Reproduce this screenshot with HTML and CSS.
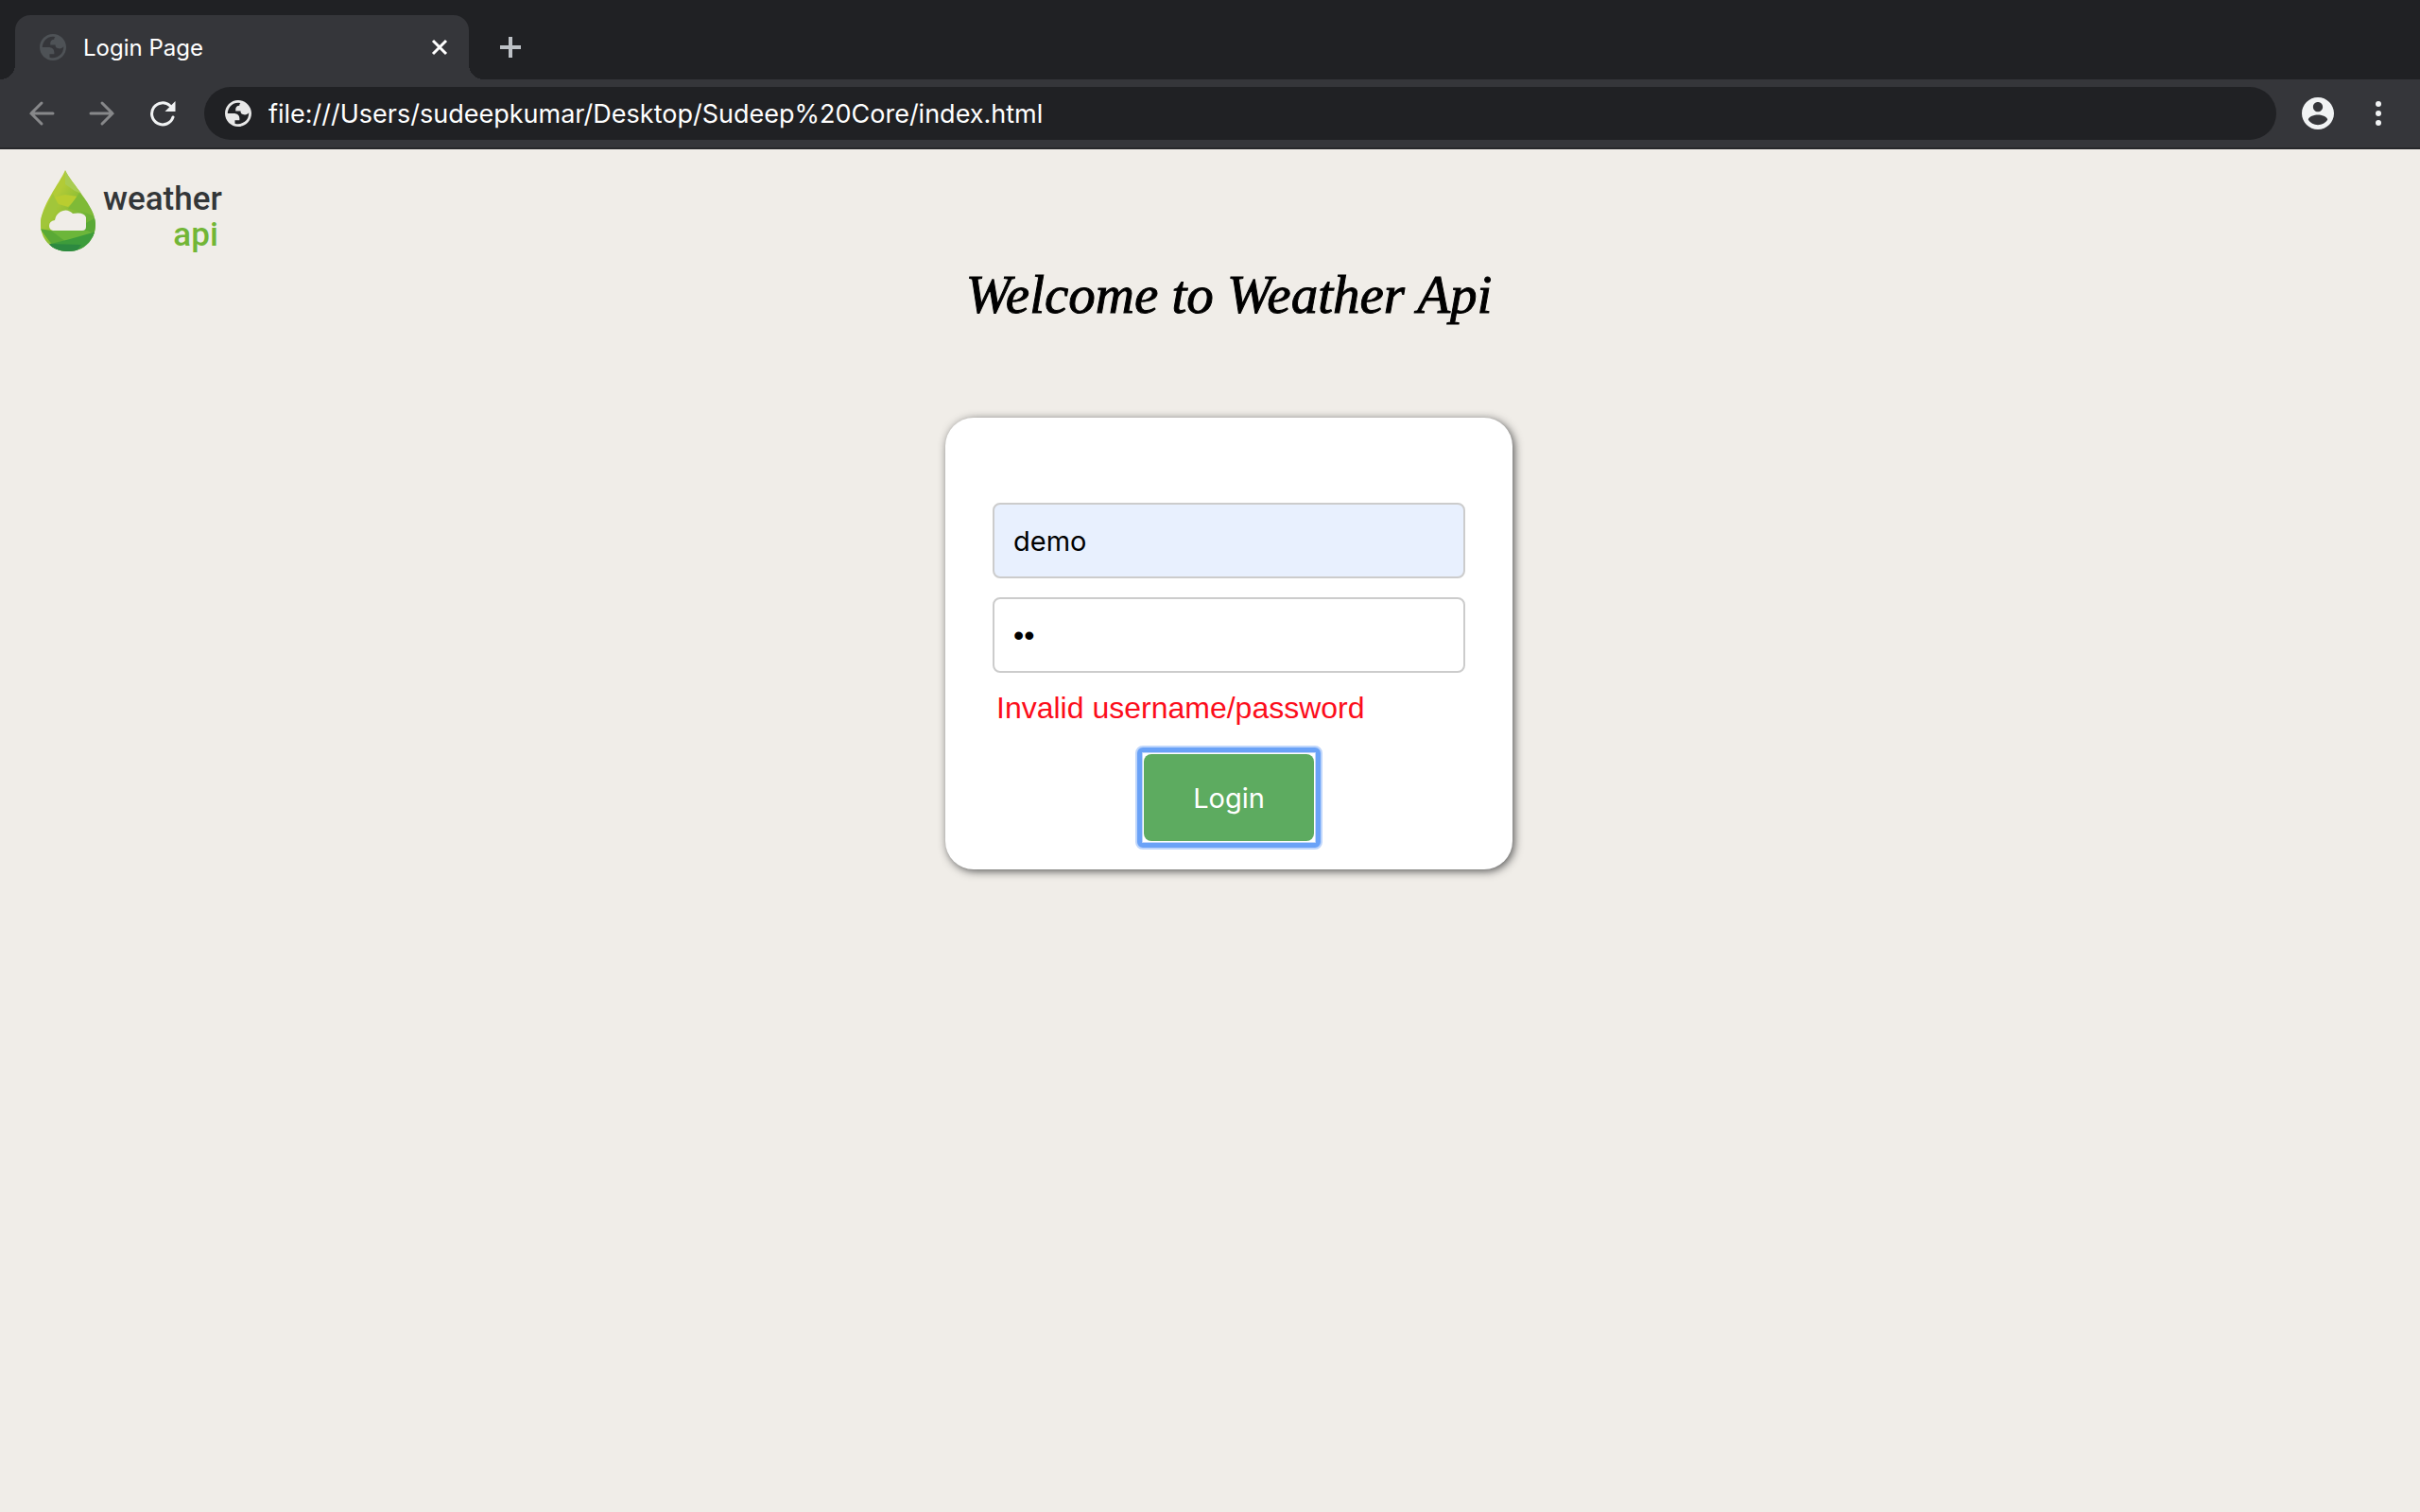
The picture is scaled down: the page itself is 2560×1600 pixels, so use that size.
FILE: index.html
```html
<!DOCTYPE html>
<html lang="en">
<head>
<meta charset="utf-8">
<title>Login Page</title>
<link rel="stylesheet" href="styles.css">
</head>
<body>
<svg class="sprite" aria-hidden="true">
  <symbol id="globe" viewBox="2 2 20 20">
    <path fill-rule="evenodd" d="M12 2C6.48 2 2 6.48 2 12s4.48 10 10 10 10-4.48 10-10S17.52 2 12 2zM4 12h4.4c3.407.022 4.922 1.73 4.543 5.127H9.488v2.47a8.004 8.004 0 0 0 10.498-8.083C19.327 12.504 18.332 13 17 13c-2.137 0-3.206-.916-3.206-2.75h-3.748c-.274-2.728.683-4.092 2.87-4.092 0-.975.327-1.597.811-1.97A8.004 8.004 0 0 0 4 12z"/>
  </symbol>
</svg>
<div class="browser">
  <div class="tab-strip">
    <div class="tab">
      <svg class="tab-icon"><use href="#globe"/></svg>
      <span class="tab-title">Login Page</span>
      <button class="icon-button" aria-label="Close tab"><svg class="close" viewBox="0 0 18 18"><path d="M2 2l14 14M16 2L2 16"/></svg></button>
    </div>
    <button class="icon-button new-tab" aria-label="New tab"><svg class="plus" viewBox="0 0 24 24"><path d="M12 1v22M1 12h22"/></svg></button>
  </div>
  <div class="toolbar">
    <button class="icon-button" aria-label="Back"><svg class="arrow" viewBox="0 0 28 28"><path d="M26 14H3M14 3L3 14l11 11"/></svg></button>
    <button class="icon-button" aria-label="Forward"><svg class="arrow" viewBox="0 0 28 28"><path d="M2 14h23M14 3l11 11-11 11"/></svg></button>
    <button class="icon-button" aria-label="Reload"><svg class="reload" viewBox="0 0 28 28"><path class="reload-arc" d="M25 18A11.500 11.500 0 1 1 22 6"/><path class="reload-tip" d="M27.500 1v11h-11z"/></svg></button>
    <div class="address">
      <svg class="site-icon"><use href="#globe"/></svg>
      <input class="url" type="text" aria-label="Address" value="file:///Users/sudeepkumar/Desktop/Sudeep%20Core/index.html">
    </div>
    <button class="icon-button profile" aria-label="Profile"><svg class="avatar" viewBox="2 2 20 20"><path d="M12 2C6.480 2 2 6.480 2 12s4.480 10 10 10 10-4.480 10-10S17.520 2 12 2zm0 3c1.660 0 3 1.340 3 3s-1.340 3-3 3-3-1.340-3-3 1.340-3 3-3zm0 14.200c-2.500 0-4.710-1.280-6-3.220.030-1.990 4-3.080 6-3.080 1.990 0 5.970 1.090 6 3.080-1.290 1.940-3.500 3.220-6 3.220z"/></svg></button>
    <button class="icon-button" aria-label="Menu"><svg class="dots" viewBox="0 0 6 28"><circle cx="3" cy="4" r="3"/><circle cx="3" cy="14" r="3"/><circle cx="3" cy="24" r="3"/></svg></button>
  </div>
</div>
<header class="site-header">
  <a class="logo" href="#">
    <svg class="drop" viewBox="0 0 60 86">
      <defs>
        <clipPath id="drop-shape"><path d="M27 0C33 14 59 38 59 57 59 75 46 86 30 86S1 75 1 57C1 38 21 14 27 0z"/></clipPath>
        <linearGradient id="leaf" x1="0" y1="0" x2="1" y2="1"><stop offset="0.300" stop-color="#b2cb36"/><stop offset="0.700" stop-color="#6eb336"/></linearGradient>
      </defs>
      <g clip-path="url(#drop-shape)">
        <path fill="url(#leaf)" d="M0 0h60v86H0z"/>
        <path fill="#a9cc52" d="M27 0l20 26-10-4-10-7z"/>
        <path fill="#b9cd30" d="M14 29l13-3 14 2-11 11-10-3z"/>
        <path fill="#a1c63a" d="M1 50l13-25 6 12-9 17-10 10z"/>
        <path fill="#7fba37" d="M42 24l18 26-14-6-16-3z"/>
        <path fill="#5aa936" d="M0 62l12 2 19 2 29-16v20L14 80z"/>
        <path fill="#6cb63a" d="M12 64h38l10 4-32 8z"/>
        <path fill="#3d9c3b" d="M12 78l20-5 28-8v24H0z"/>
        <path fill="#2c8940" d="M10 78l34 1-6 8H16z"/>
      </g>
      <path fill="#f0ede8" d="M14 64q-4-1-4-5 0-5 6-6 1-6 6-9 7-4 13 2 12-2 14 4v10q0 4-4 4z"/>
    </svg>
    <span class="logo-text"><span class="logo-weather">weather</span><span class="logo-api">api</span></span>
  </a>
</header>
<main class="content">
  <h1 class="welcome">Welcome to Weather Api</h1>
  <form class="card">
    <input class="field field-filled" type="text" aria-label="Username" value="demo">
    <input class="field field-secret" type="password" aria-label="Password" value="ab">
    <p class="error" role="alert">Invalid username/password</p>
    <button class="login" type="button">Login</button>
  </form>
</main>
</body>
</html>
```
FILE: styles.css
```css
* { box-sizing: border-box; }
body {
  margin: 0;
  min-height: 100vh;
  background: #f0ede8;
  font-family: "Liberation Sans", Arial, sans-serif;
}
.sprite { display: none; }
.icon-button {
  display: flex;
  flex: none;
  padding: 0;
  border: 0;
  background: none;
}

.browser {
  background: #35363a;
  border-bottom: 2px solid #27282b;
  color: #fff;
  font-family: Inter, sans-serif;
}
.tab-strip {
  display: flex;
  align-items: flex-end;
  height: 84px;
  padding-left: 16px;
  background: #202124;
}
.tab {
  position: relative;
  display: flex;
  align-items: center;
  width: 480px;
  height: 68px;
  padding: 0 22px 0 26px;
  border-radius: 16px 16px 0 0;
  background: #35363a;
}
/* flared feet where the tab meets the toolbar */
.tab::before, .tab::after {
  content: "";
  position: absolute;
  bottom: 0;
  width: 16px;
  height: 16px;
}
.tab::before { right: 100%; background: radial-gradient(circle at 0 0, #202124 16px, #35363a 16px); }
.tab::after { left: 100%; background: radial-gradient(circle at 100% 0, #202124 16px, #35363a 16px); }
.tab-icon { width: 28px; height: 28px; fill: #4e5256; }
.tab-title { flex: 1; margin-left: 18px; font-size: 24px; }
.close { width: 18px; height: 18px; fill: none; stroke: #fff; stroke-width: 3; }
.new-tab { align-items: center; height: 68px; margin-left: 32px; }
.plus { width: 24px; height: 24px; stroke: #bdc1c6; stroke-width: 4; }

.toolbar {
  display: flex;
  align-items: center;
  height: 72px;
  padding: 0 41px 0 30px;
}
.arrow {
  width: 28px;
  height: 28px;
  margin-right: 36px;
  fill: none;
  stroke: #87888a;
  stroke-width: 3;
  stroke-linecap: round;
}
.reload { width: 28px; height: 28px; margin-right: 30px; }
.reload-arc { fill: none; stroke: #f1f3f4; stroke-width: 3; stroke-linecap: round; }
.reload-tip { fill: #f1f3f4; }
.address {
  display: flex;
  flex: 1;
  align-items: center;
  height: 56px;
  padding: 0 24px 0 22px;
  border-radius: 28px;
  background: #202124;
}
.site-icon { width: 28px; height: 28px; fill: #e8e8e8; }
.url {
  flex: 1;
  margin-left: 18px;
  padding: 0;
  border: 0;
  background: none;
  color: #fff;
  font: 27px Inter, sans-serif;
}
.profile { margin: 0 44px 0 27px; }
.avatar { width: 34px; height: 34px; fill: #f1f3f4; }
.dots { width: 6px; height: 28px; fill: #f1f3f4; }

.site-header { display: flex; padding: 22px 42px 0; }
.logo { display: flex; text-decoration: none; }
.drop { width: 60px; height: 86px; }
.logo-text {
  display: flex;
  flex-direction: column;
  align-items: flex-end;
  padding: 12px 0 0 7px;
  font: 500 35px/38px Roboto, sans-serif;
}
.logo-weather { color: #333638; }
.logo-api { padding-right: 4px; color: #72b636; }

.content {
  display: flex;
  flex-direction: column;
  align-items: center;
  padding-left: 40px;
}
.welcome {
  margin: 8px 0 94px;
  font: italic 400 57px/72px "Liberation Serif", serif;
  -webkit-text-stroke: 1px #000;
}
.card {
  display: flex;
  flex-direction: column;
  width: 600px;
  padding: 90px 50px 30px;
  border-radius: 30px;
  background: #fff;
  box-shadow: 2px 2px 10px #555;
}
.field {
  height: 80px;
  margin-bottom: 20px;
  padding: 0 20px;
  border: 2px solid #ccc;
  border-radius: 8px;
  background: #fff;
  color: #000;
  font: 29px Inter, sans-serif;
}
.field-filled { background: #e8f0fe; }
.field-secret { font: 32px "Liberation Sans", Arial, sans-serif; }
.error { margin: 0 0 32px 4px; color: #fc0d1b; font-size: 32px; line-height: 34px; }
.login {
  position: relative;
  align-self: center;
  width: 180px;
  height: 92px;
  padding: 0;
  border: 0;
  border-radius: 8px;
  background: #5dab60;
  color: #fff;
  font: 29px Inter, sans-serif;
}
/* two-tone focus ring with square inner corners */
.login::before, .login::after {
  content: "";
  position: absolute;
  border-style: solid;
}
.login::before { inset: -9px; border-width: 3px; border-color: #bfd6fb; border-radius: 8px; }
.login::after {
  inset: -7px;
  border-width: 5px;
  border-color: #6aa2f7;
  border-radius: 6px;
  box-shadow: inset 0 0 0 1px #bfd6fb;
}
```
